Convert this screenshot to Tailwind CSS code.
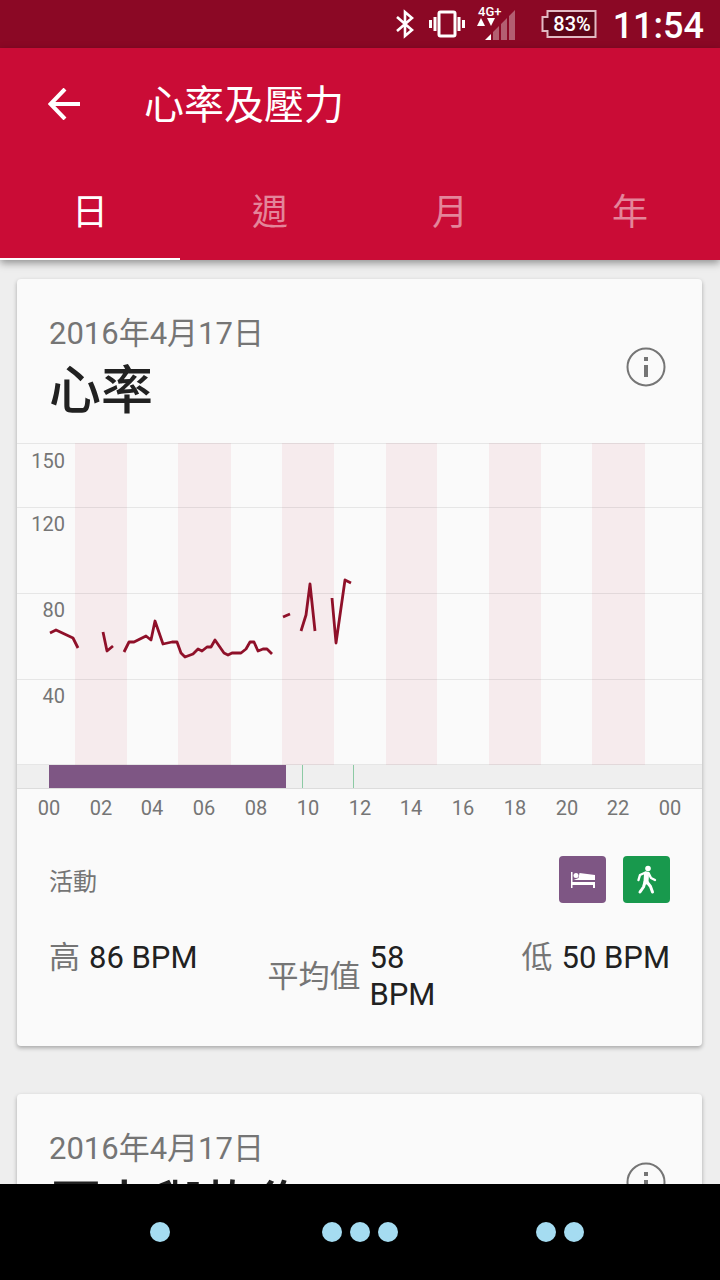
<!DOCTYPE html>
<html lang="zh-Hant">
  <head>
    <meta charset="UTF-8" />
    <meta name="viewport" content="width=device-width, initial-scale=1.0" />
    <title>心率及壓力</title>
    <script src="https://cdn.jsdelivr.net/npm/@tailwindcss/browser@4"></script>
  </head>
  <body class="flex h-screen flex-col overflow-hidden bg-[#eeeeee] font-[Roboto,'Noto_Sans_CJK_TC',sans-serif] text-[#212121]">
    <!-- Status bar -->
    <div class="flex h-12 shrink-0 items-center justify-end bg-[#8b0825] pr-4 text-white">
      <svg class="mr-3 h-8 w-6" viewBox="0 0 24 32" fill="none" stroke="currentColor" stroke-width="2.600">
        <path d="M4 9l15 13-7 6V4l7 6L4 23" />
      </svg>
      <svg class="mr-3 h-8 w-9" viewBox="0 0 36 32" fill="none" stroke="currentColor" stroke-width="3">
        <rect x="10" y="4" width="16" height="24" rx="1.5" />
        <path d="M6 9v14M1.500 12v8M30 9v14M34.500 12v8" />
      </svg>
      <svg class="mr-6 h-10 w-10" viewBox="0 0 40 40" fill="currentColor">
        <text x="1" y="12" font-size="13" font-weight="500">4G+</text>
        <path d="M0 22l4-8 4 8zM10 14h8l-4 8z" />
        <path d="M8 36l6-6v6z" />
        <path d="M16 36V28l6-6v14zM24 36V20l6-6v22zM32 36V12l6-6v30z" opacity=".35" />
      </svg>
      <svg class="mr-4 h-8 w-14" viewBox="0 0 56 32">
        <path d="M6.500 3h48v26h-48v-6h-5V9h5z" fill="#5d0518" stroke="#e2b9c2" stroke-width="2" />
        <text x="31" y="23" font-size="20" font-weight="500" text-anchor="middle" fill="#fff">83%</text>
      </svg>
      <span class="pt-1 text-[36px] leading-[44px] font-medium">11:54</span>
    </div>

    <!-- App bar with tabs -->
    <header class="z-10 shrink-0 bg-[#ca0c36] text-white shadow-[0_3px_8px_rgba(0,0,0,0.4)]">
      <div class="flex h-28 items-center pl-12">
        <button aria-label="返回" class="mr-16">
          <svg class="h-8 w-8" viewBox="0 0 32 32" fill="none" stroke="currentColor" stroke-width="4">
            <path d="M32 16H3M17 1L2.500 16 17 31" />
          </svg>
        </button>
        <h1 class="pt-1 text-[40px] leading-[56px]">心率及壓力</h1>
      </div>
      <div role="tablist" class="grid h-[100px] grid-cols-4 text-[36px]">
        <button role="tab" aria-selected="true" class="border-b-2 border-white pt-2">日</button>
        <button role="tab" aria-selected="false" class="border-b-2 border-transparent pt-2 text-white/50">週</button>
        <button role="tab" aria-selected="false" class="border-b-2 border-transparent pt-2 text-white/50">月</button>
        <button role="tab" aria-selected="false" class="border-b-2 border-transparent pt-2 text-white/50">年</button>
      </div>
    </header>

    <main class="flex min-h-0 flex-1 flex-col gap-12 overflow-hidden pt-[19px] pr-[18px] pl-[17px]">
      <!-- Heart rate -->
      <section class="shrink-0 rounded bg-[#fafafa] shadow-[0_2px_4px_rgba(0,0,0,0.3)]">
        <div class="flex items-start justify-between px-8 pt-8 pb-4">
          <div>
            <p class="text-[31px] leading-[46px] text-[#757575]">2016年4月17日</p>
            <h2 class="text-[52px] leading-[70px] font-medium">心率</h2>
          </div>
          <button aria-label="資訊" class="mt-9 mr-1 text-[#757575]">
            <svg class="h-10 w-10" viewBox="0 0 40 40" fill="currentColor">
              <circle cx="20" cy="20" r="18.500" fill="none" stroke="currentColor" stroke-width="2" />
              <path d="M18 10h4v4h-4zM18 18h4v12h-4z" />
            </svg>
          </button>
        </div>

        <svg class="w-full" viewBox="0 0 685 387" role="img" aria-label="心率">
          <g fill="#f6ebed">
            <rect x="58" y="0" width="52" height="322" />
            <rect x="161" y="0" width="53" height="322" />
            <rect x="265" y="0" width="52" height="322" />
            <rect x="369" y="0" width="51" height="322" />
            <rect x="472" y="0" width="52" height="322" />
            <rect x="575" y="0" width="53" height="322" />
          </g>
          <rect x="0" y="322" width="685" height="24" fill="#efefef" />
          <path d="M0 .5h685M0 64.500h685M0 150.500h685M0 236.500h685M0 321.500h685M0 345.500h685" stroke="#000" stroke-opacity=".08" />
          <!-- sleep, then two short walks -->
          <rect x="32" y="322" width="237" height="23" fill="#7e5684" />
          <path d="M285.500 322v23M336.500 322v23" stroke="#8ccaa4" />
          <g fill="none" stroke="#8f1029" stroke-width="2.800" stroke-linejoin="round">
            <polyline points="33,190 39,187 56,195 61,205" />
            <polyline points="86,189 90,208 96,203" />
            <polyline points="107,209 112,199 117,199 129,193 134,197 138,178 146,201 155,199 160,199 164,210 168,214 176,211 181,206 185,208 190,204 194,204 198,197 207,210 211,212 215,210 224,210 229,206 233,199 237,199 241,208 246,206 250,206 255,211" />
            <polyline points="266,174 273,171" />
            <polyline points="284,188 289,172 293,141 298,188" />
            <polyline points="315,155 319,200 328,137 334,140" />
          </g>
          <g font-size="20" fill="#757575" text-anchor="end">
            <text x="48" y="25">150</text>
            <text x="48" y="88">120</text>
            <text x="48" y="174">80</text>
            <text x="48" y="260">40</text>
          </g>
          <g font-size="20" fill="#757575" text-anchor="middle">
            <text x="32" y="372">00</text>
            <text x="84" y="372">02</text>
            <text x="135" y="372">04</text>
            <text x="187" y="372">06</text>
            <text x="239" y="372">08</text>
            <text x="291" y="372">10</text>
            <text x="343" y="372">12</text>
            <text x="394" y="372">14</text>
            <text x="446" y="372">16</text>
            <text x="498" y="372">18</text>
            <text x="550" y="372">20</text>
            <text x="601" y="372">22</text>
            <text x="653" y="372">00</text>
          </g>
        </svg>

        <div class="flex items-center gap-[17px] px-8 pt-[26px]">
          <h3 class="mr-auto pt-1 text-[24px] leading-8 text-[#757575]">活動</h3>
          <div class="flex h-[47px] w-[47px] items-center justify-center rounded bg-[#7e5684] text-white">
            <svg class="h-8 w-8" viewBox="0 0 32 32" fill="currentColor">
              <path d="M4 8h1.500v9H28v7h-2v-3H5.500v3H4z" />
              <circle cx="9" cy="11.500" r="2.500" />
              <path d="M6.500 16l5-2 1-5 15.500 2v5z" />
              <path d="M5.500 17.500H28" stroke="#7e5684" />
            </svg>
          </div>
          <div class="flex h-[47px] w-[47px] items-center justify-center rounded bg-[#18994d] text-white">
            <svg class="h-8 w-8" viewBox="0 0 32 32" fill="none" stroke="currentColor" stroke-linecap="round" stroke-linejoin="round">
              <circle cx="17" cy="4.500" r="2.800" fill="currentColor" stroke="none" />
              <path d="M15.500 10l-.5 8" stroke-width="5" />
              <path d="M14.500 8.500L9 11l-1.500 5M17.500 9l2.500 5 4 2" stroke-width="2.400" />
              <path d="M14 18l-1.500 5L9 28M16 18l3.500 4.500 2 5.500" stroke-width="3" />
            </svg>
          </div>
        </div>

        <dl class="flex items-start justify-between px-8 pt-9 pb-[33px] text-[31px] leading-[37px]">
          <div class="flex items-center gap-[9px]">
            <dt class="text-[#757575]">高</dt>
            <dd>86 BPM</dd>
          </div>
          <div class="flex items-center gap-[9px]">
            <dt class="text-[#757575]">平均值</dt>
            <dd class="w-[82px]">58 BPM</dd>
          </div>
          <div class="flex items-center gap-[9px]">
            <dt class="text-[#757575]">低</dt>
            <dd>50 BPM</dd>
          </div>
        </dl>
      </section>

      <!-- Stress and recovery -->
      <section class="shrink-0 rounded bg-[#fafafa] shadow-[0_2px_4px_rgba(0,0,0,0.3)]">
        <div class="flex items-start justify-between px-8 pt-8 pb-4">
          <div>
            <p class="text-[31px] leading-[46px] text-[#757575]">2016年4月17日</p>
            <h2 class="text-[52px] leading-[70px] font-medium">壓力與恢復</h2>
          </div>
          <button aria-label="資訊" class="mt-9 mr-1 text-[#757575]">
            <svg class="h-10 w-10" viewBox="0 0 40 40" fill="currentColor">
              <circle cx="20" cy="20" r="18.500" fill="none" stroke="currentColor" stroke-width="2" />
              <path d="M18 10h4v4h-4zM18 18h4v12h-4z" />
            </svg>
          </button>
        </div>
      </section>
    </main>

    <!-- Navigation bar -->
    <nav class="z-10 grid h-24 shrink-0 grid-cols-3 bg-black px-15">
      <button aria-label="返回" class="flex items-center justify-center gap-2">
        <span class="h-5 w-5 rounded-full bg-[#a5dcf1]"></span>
      </button>
      <button aria-label="主畫面" class="flex items-center justify-center gap-2">
        <span class="h-5 w-5 rounded-full bg-[#a5dcf1]"></span>
        <span class="h-5 w-5 rounded-full bg-[#a5dcf1]"></span>
        <span class="h-5 w-5 rounded-full bg-[#a5dcf1]"></span>
      </button>
      <button aria-label="最近使用" class="flex items-center justify-center gap-2">
        <span class="h-5 w-5 rounded-full bg-[#a5dcf1]"></span>
        <span class="h-5 w-5 rounded-full bg-[#a5dcf1]"></span>
      </button>
    </nav>
  </body>
</html>
